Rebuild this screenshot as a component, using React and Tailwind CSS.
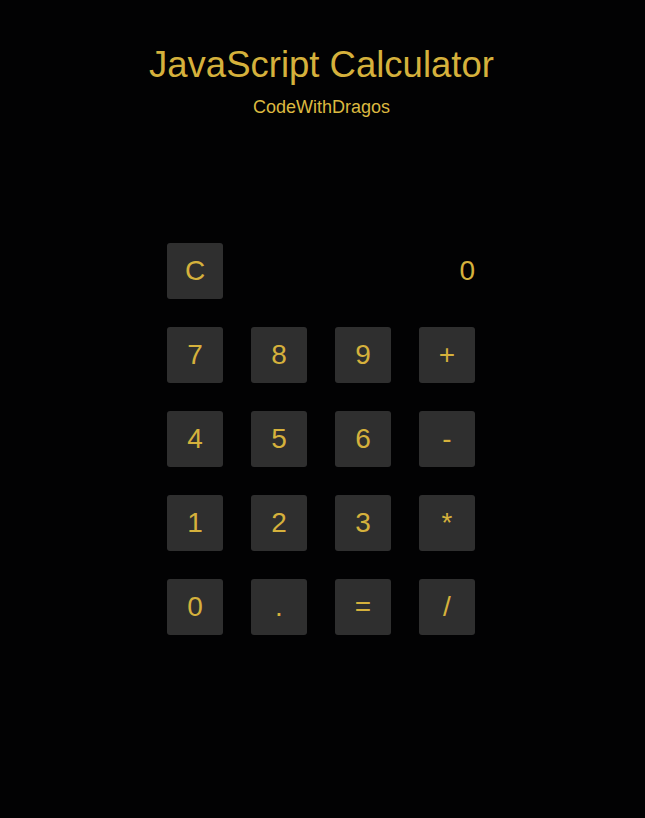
import React from "react";

const rows = [
  ["7", "8", "9", "+"],
  ["4", "5", "6", "-"],
  ["1", "2", "3", "*"],
  ["0", ".", "=", "/"],
];

function Key({ label }) {
  return (
    <button className="w-[56px] h-[56px] rounded-[3px] bg-[#2f2f2f] text-[#d5b13c] text-[28px] leading-none flex items-center justify-center">
      {label}
    </button>
  );
}

export default function App() {
  return (
    <div className="min-h-[818px] w-full bg-[#020203] text-[#d5b13c]" style={{ fontFamily: '"Liberation Sans", Arial, sans-serif' }}>
      <div className="pt-[44px] flex flex-col items-center pr-[2px]">
        <h1 className="text-[36.5px] leading-[42px] font-normal">JavaScript Calculator</h1>
        <p className="mt-[10px] text-[18px] leading-[22px] text-[#dcb940]">CodeWithDragos</p>
      </div>
      <div className="mt-[125px] flex justify-center pr-[3px]">
        <div className="w-[308px] flex flex-col gap-[28px]">
          <div className="flex items-center justify-between">
            <Key label="C" />
            <span className="text-[28px] leading-none">0</span>
          </div>
          {rows.map((r, i) => (
            <div key={i} className="flex gap-[28px]">
              {r.map((k) => (
                <Key key={k} label={k} />
              ))}
            </div>
          ))}
        </div>
      </div>
    </div>
  );
}
